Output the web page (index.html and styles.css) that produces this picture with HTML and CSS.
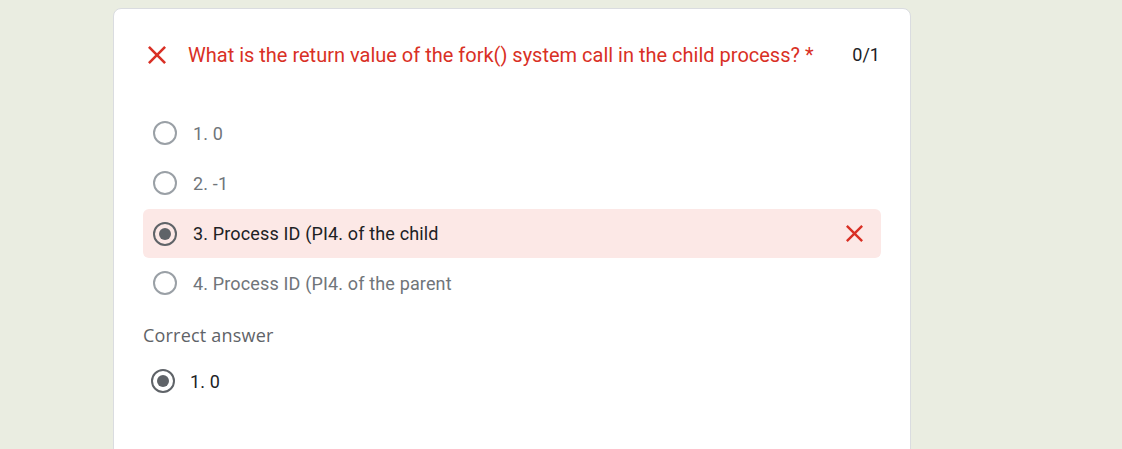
FILE: index.html
```html
<!DOCTYPE html>
<html>
<head>
<meta charset="utf-8">
<link rel="stylesheet" href="styles.css">
</head>
<body>
<div class="page">
  <div class="card">
    <div class="header">
      <svg class="xicon" viewBox="5 5 14 14" width="18" height="18"><path fill="#d93025" d="M19 6.41L17.59 5 12 10.59 6.41 5 5 6.41 10.59 12 5 17.59 6.41 19 12 13.41 17.59 19 19 17.59 13.41 12z"/></svg>
      <div class="qtext">What is the return value of the fork() system call in the child process? *</div>
      <div class="score">0/1</div>
    </div>
    <div class="options">
      <div class="opt"><span class="radio"></span><span class="label">1. 0</span></div>
      <div class="opt"><span class="radio"></span><span class="label">2. -1</span></div>
      <div class="opt wrong"><span class="radio checked"></span><span class="label dark">3. Process ID (PI4. of the child</span>
        <svg class="xicon rowx" viewBox="5 5 14 14" width="17" height="17"><path fill="#d93025" d="M19 6.41L17.59 5 12 10.59 6.41 5 5 6.41 10.59 12 5 17.59 6.41 19 12 13.41 17.59 19 19 17.59 13.41 12z"/></svg>
      </div>
      <div class="opt last"><span class="radio"></span><span class="label">4. Process ID (PI4. of the parent</span></div>
    </div>
    <div class="correct-title">Correct answer</div>
    <div class="correct-opt"><span class="radio checked"></span><span class="label dark">1. 0</span></div>
  </div>
</div>
</body>
</html>
```
FILE: styles.css
```css
html, body {
  margin: 0;
  padding: 0;
  background: #eaede1;
  font-family: Roboto, "Liberation Sans", Arial, sans-serif;
  overflow: hidden;
}
.page {
  padding: 8px 0 0 113px;
}
.card {
  width: 738px;
  height: 460px;
  background: #fff;
  border: 1px solid #dadce0;
  border-radius: 8px;
  padding: 0 29px;
}
.header {
  display: flex;
  align-items: center;
  margin-top: 33px;
  padding-left: 5px;
  height: 26px;
}
.xicon {
  display: block;
  flex: none;
}
.qtext {
  margin-left: 22px;
  color: #d93025;
  font-size: 20px;
  line-height: 26px;
  flex: 1;
}
.score {
  color: #202124;
  font-size: 18px;
  line-height: 26px;
  padding-right: 1px;
}
.options {
  margin-top: 40px;
  display: flex;
  flex-direction: column;
}
.opt {
  display: flex;
  align-items: center;
  height: 50px;
  padding-left: 10px;
  border-radius: 6px;
}
.opt.wrong {
  background: #fce8e6;
  height: 49px;
  margin-top: 1px;
}
.opt.last {
  height: 50px;
}
.rowx {
  margin-left: auto;
  margin-right: 18px;
}
.radio {
  box-sizing: border-box;
  width: 24px;
  height: 24px;
  border: 2px solid #9aa0a6;
  border-radius: 50%;
  flex: none;
  display: flex;
  align-items: center;
  justify-content: center;
}
.radio.checked {
  border-color: #5f6368;
}
.radio.checked::after {
  content: "";
  width: 12px;
  height: 12px;
  border-radius: 50%;
  background: #5f6368;
}
.label {
  margin-left: 16px;
  font-size: 18px;
  letter-spacing: 0.15px;
  color: #70757a;
}
.label.dark {
  color: #202124;
}
.correct-title {
  margin-top: 16px;
  color: #5f6368;
  font-size: 18px;
  font-weight: 500;
  letter-spacing: 0.2px;
  line-height: 22px;
  font-family: "Open Sans", Roboto, sans-serif;
}
.correct-opt {
  display: flex;
  align-items: center;
  margin-top: 23px;
  padding-left: 8px;
}
.correct-opt .label {
  margin-left: 15px;
}
```
